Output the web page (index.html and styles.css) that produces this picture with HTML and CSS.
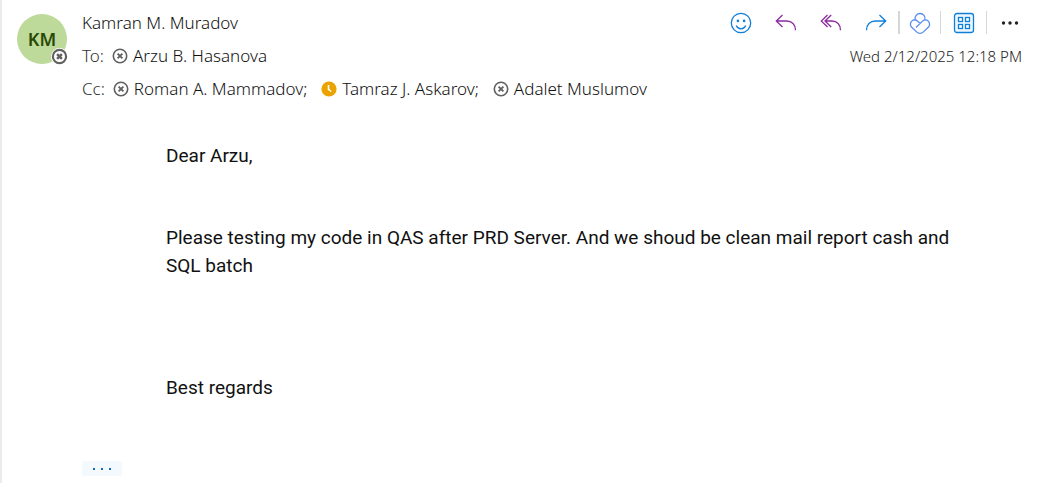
FILE: index.html
```html
<!DOCTYPE html>
<html lang="en">
<head>
    <meta charset="UTF-8">
    <meta name="viewport" content="width=device-width, initial-scale=1.0">
    <title>Mail message</title>
    <link rel="stylesheet" href="styles.css">
</head>
<body>
    <svg class="symbols" aria-hidden="true">
        <symbol id="offline" viewBox="0 0 16 16">
            <circle cx="8" cy="8" r="6.7" fill="#fff" stroke="#616161" stroke-width="1.6"/>
            <path d="M5.6 5.6l4.8 4.8M10.4 5.6l-4.8 4.8" stroke="#616161" stroke-width="1.9"/>
        </symbol>
        <symbol id="offline-bold" viewBox="0 0 17 17">
            <circle cx="8.5" cy="8.5" r="6.6" fill="#fff" stroke="#616161" stroke-width="2.2"/>
            <path d="M6.1 6.1l4.8 4.8M10.9 6.1l-4.8 4.8" stroke="#616161" stroke-width="2.4"/>
        </symbol>
        <symbol id="away" viewBox="0 0 16 16">
            <circle cx="8" cy="8" r="7.6" fill="#eaa300"/>
            <path d="M7.5 4v4.3l2.7 2.2" fill="none" stroke="#fff" stroke-width="1.6"/>
        </symbol>
    </svg>

    <article class="message">
        <header class="header">
            <div class="avatar">
                KM
                <svg class="avatar-status"><use href="#offline-bold"/></svg>
            </div>

            <div class="header-main">
                <div class="row">
                    <span class="sender">Kamran M. Muradov</span>
                    <div class="toolbar">
                        <button type="button" aria-label="React">
                            <svg viewBox="0 0 22 22" stroke="#0f7fd8">
                                <circle cx="11" cy="11" r="9.7"/>
                                <path d="M6.2 13.6a5.2 5.2 0 0 0 9.6 0"/>
                                <circle cx="7.9" cy="8.9" r="1.3" fill="#0f7fd8" stroke="none"/>
                                <circle cx="14.1" cy="8.9" r="1.3" fill="#0f7fd8" stroke="none"/>
                            </svg>
                        </button>
                        <button type="button" aria-label="Reply">
                            <svg viewBox="0 0 22 22" stroke="#8c2aa0">
                                <path d="M7.5 3L1.3 9l6.2 6M1.3 9h10.2c5.5 0 9 3.5 9 9.2"/>
                            </svg>
                        </button>
                        <button type="button" aria-label="Reply all">
                            <svg viewBox="0 0 22 22" stroke="#8c2aa0">
                                <path d="M7.5 3L1.3 9l6.2 6M11.2 3L5 9l6.2 6M5 9h7c5 0 8.5 3.5 8.5 9.2"/>
                            </svg>
                        </button>
                        <button type="button" aria-label="Forward">
                            <svg viewBox="0 0 22 22" stroke="#0f7fd8">
                                <path d="M14.5 3l6.2 6-6.2 6M20.7 9H10.5c-5.5 0-9 3.5-9 9.2"/>
                            </svg>
                        </button>
                        <span class="divider thick"></span>
                        <button type="button" class="narrow" aria-label="Viva">
                            <svg viewBox="0 0 22 22" stroke="#5b8def" stroke-linejoin="round">
                                <path d="M6.4 8.4A5 5 0 1 1 15.8 8"/>
                                <path d="M11.3 11.6L8.3 8.9c-1.6-1.4-4-1.3-5.6.2-1.700 1.700-1.700 4.400 0 6.100l4.900 4.700c1.900 1.800 4.900 1.800 6.800 0l4.900-4.700c1.700-1.700 1.700-4.400 0-6.100-1.600-1.500-4.200-1.500-5.800 0l-6.500 6.400"/>
                            </svg>
                        </button>
                        <span class="divider"></span>
                        <button type="button" aria-label="Apps">
                            <svg viewBox="0 0 22 22" stroke="#0f7fd8">
                                <rect x="1.5" y="1.5" width="19" height="19" rx="2.5" fill="#eef6fd"/>
                                <rect x="5.5" y="5.5" width="4" height="4" fill="#fff"/>
                                <rect x="12.5" y="5.5" width="4" height="4" fill="#fff"/>
                                <rect x="5.5" y="12.5" width="4" height="4" fill="#fff"/>
                                <rect x="12.5" y="12.5" width="4" height="4" fill="#fff"/>
                            </svg>
                        </button>
                        <span class="divider"></span>
                        <button type="button" aria-label="More actions">
                            <svg viewBox="0 0 22 22" fill="#222">
                                <circle cx="4.5" cy="11" r="1.7"/>
                                <circle cx="11" cy="11" r="1.7"/>
                                <circle cx="17.5" cy="11" r="1.7"/>
                            </svg>
                        </button>
                    </div>
                </div>

                <div class="row">
                    <div class="recipients">
                        <span class="label">To:</span>
                        <span class="person"><svg><use href="#offline"/></svg>Arzu B. Hasanova</span>
                    </div>
                    <time class="date" datetime="2025-02-12T12:18">Wed 2/12/2025 12:18 PM</time>
                </div>

                <div class="row">
                    <div class="recipients">
                        <span class="label">Cc:</span>
                        <span class="person"><svg><use href="#offline"/></svg>Roman A. Mammadov;</span>
                        <span class="person"><svg><use href="#away"/></svg>Tamraz J. Askarov;</span>
                        <span class="person"><svg><use href="#offline"/></svg>Adalet Muslumov</span>
                    </div>
                </div>
            </div>
        </header>

        <div class="content">
            <p>Dear Arzu,</p>
            <p>Please testing my code in QAS after PRD Server. And we shoud be clean mail report cash and SQL batch</p>
            <p class="closing">Best regards</p>
        </div>

        <button type="button" class="expand" aria-label="Show trimmed content">
            <svg viewBox="0 0 20 4" fill="#0f6cbd">
                <rect x="1" y="1" width="2" height="2"/>
                <rect x="9" y="1" width="2" height="2"/>
                <rect x="17" y="1" width="2" height="2"/>
            </svg>
        </button>
    </article>
</body>
</html>
```
FILE: styles.css
```css
* {
    box-sizing: border-box;
}
body {
    margin: 0;
    background: #fff;
    color: #111;
    font-family: "Noto Sans", "Open Sans", sans-serif;
    font-size: 17px;
    font-weight: 300;
}
button {
    padding: 0;
    border: none;
    background: none;
    cursor: pointer;
}
.symbols {
    display: none;
}
.message {
    min-height: 100vh;
    border-left: 2px solid #ebebeb;
}
.header {
    display: flex;
    gap: 15px;
    padding: 6px 5px 0 15px;
}
.avatar {
    position: relative;
    flex: none;
    width: 50px;
    height: 50px;
    margin-top: 8px;
    border-radius: 50%;
    background: #bdda9b;
    color: #294903;
    font-size: 18px;
    font-weight: 600;
    line-height: 50px;
    text-align: center;
}
.avatar-status {
    position: absolute;
    right: -1px;
    bottom: -1px;
    width: 17px;
    height: 17px;
    border-radius: 50%;
    background: #fff;
}
.header-main {
    flex: 1;
}
.row {
    display: flex;
    justify-content: space-between;
    align-items: center;
    min-height: 33px;
}
.toolbar {
    display: flex;
    align-items: center;
}
.toolbar button {
    display: flex;
    align-items: center;
    justify-content: center;
    width: 45px;
    height: 32px;
}
.toolbar .narrow {
    width: 40px;
}
.toolbar svg {
    width: 22px;
    height: 22px;
    fill: none;
    stroke-width: 1.3;
}
.toolbar svg[fill] {
    fill: #222;
}
.divider {
    width: 1px;
    height: 23px;
    background: #d6d6d6;
}
.thick {
    width: 2px;
}
.recipients {
    display: flex;
    flex-wrap: wrap;
    gap: 0 14px;
}
.label {
    margin-right: -6px;
    color: #333;
}
.person {
    display: flex;
    align-items: center;
    gap: 5px;
}
.person svg {
    width: 16px;
    height: 16px;
}
.date {
    margin-right: 10px;
    color: #222;
    font-size: 15px;
}
.content {
    padding: 37px 64px 0 164px;
    font-family: Roboto, "Noto Sans", sans-serif;
    font-size: 19px;
    font-weight: 400;
    line-height: 28px;
}
.content p {
    margin: 0 0 54px;
}
.content .closing {
    margin: 94px 0 59px;
}
.expand {
    display: flex;
    align-items: center;
    justify-content: center;
    width: 40px;
    height: 15px;
    margin-left: 80px;
    border-radius: 2px;
    background: #f3f9fd;
}
.expand svg {
    width: 20px;
    height: 4px;
}
```
